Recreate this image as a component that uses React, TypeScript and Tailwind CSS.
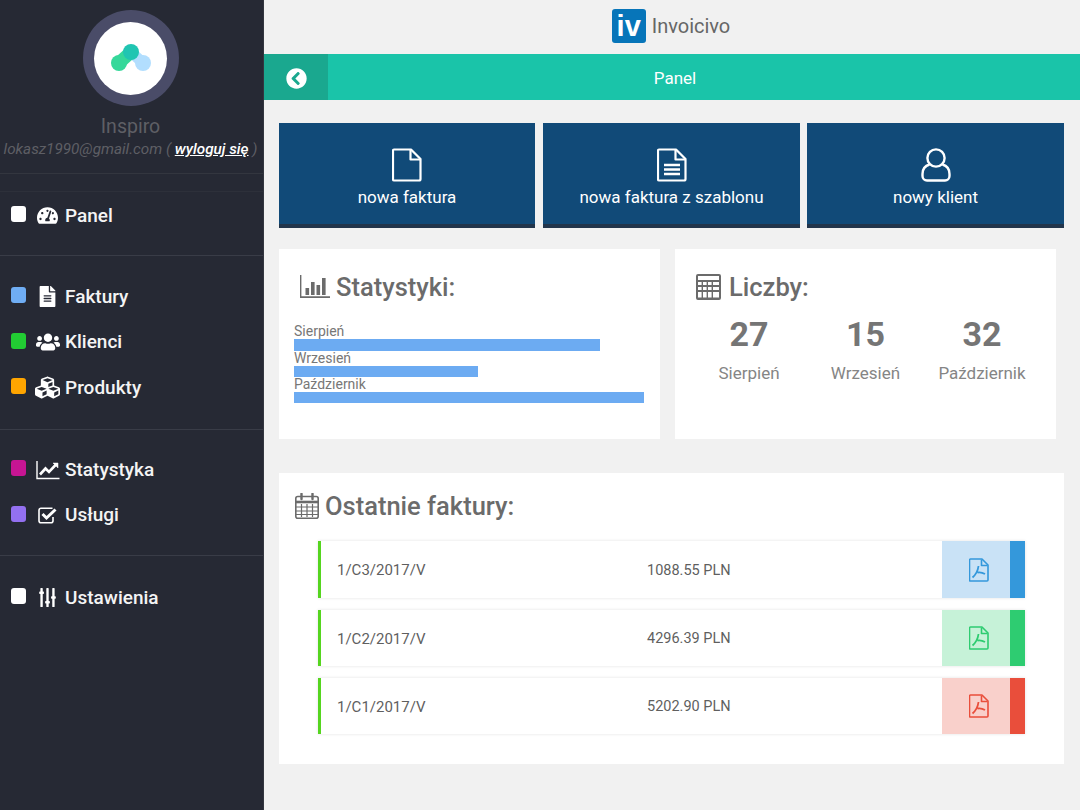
import React from 'react';
import { FaChevronCircleLeft, FaCubes, FaFileAlt, FaSlidersH, FaTachometerAlt, FaUsers } from 'react-icons/fa';

const FileOutline: React.FC<{ lines?: boolean }> = ({ lines }) => (
  <svg width="30" height="34" viewBox="0 0 30 34" fill="none" stroke="currentColor" strokeWidth="2.2" strokeLinejoin="round">
    <path d="M2 1.5 H19 L28.5 11 V31 a1.5 1.5 0 0 1 -1.5 1.5 H2 a1 1 0 0 1 -1 -1 V2.5 a1 1 0 0 1 1 -1 Z" />
    <path d="M18.5 2 V11.5 H28" />
    {lines && <path d="M7 17 H23 M7 21.5 H23 M7 26 H23" strokeWidth="2.4" />}
  </svg>
);

const UserOutline = () => (
  <svg width="30" height="34" viewBox="0 0 30 34" fill="none" stroke="currentColor" strokeWidth="2.4">
    <circle cx="15" cy="10" r="8.6" />
    <path d="M8.5 16.5 C5 17.5 1.5 20 1.5 26 V28 a4.5 4.5 0 0 0 4.5 4.5 H24 a4.5 4.5 0 0 0 4.5 -4.5 V26 C28.5 20 25 17.5 21.5 16.5" />
  </svg>
);

const PdfOutline = () => (
  <svg width="20" height="24" viewBox="0 0 20 24" fill="none" stroke="currentColor" strokeWidth="1.6" strokeLinejoin="round">
    <path d="M1.5 1 H13 L19 7 V22 a1 1 0 0 1 -1 1 H1.5 a1 1 0 0 1 -1 -1 V2 a1 1 0 0 1 1 -1 Z" />
    <path d="M12.5 1.5 V7.5 H18.5" />
    <path d="M9.5 8 C9 12 7.5 16 3.5 19.5 M8.5 14.5 C11 14 13.5 14.5 16 16" strokeWidth="1.8" />
  </svg>
);

const LineChartIcon = () => (
  <svg width="24" height="20" viewBox="0 0 24 20" fill="none" stroke="currentColor">
    <path d="M1 1 V18.5 H23.5" strokeWidth="1.4" />
    <path d="M4 14.5 L9.5 8.5 L13 12 L20.5 4" strokeWidth="2.6" />
    <path d="M17 3 H22 V8 Z" fill="currentColor" strokeWidth="0.5" />
  </svg>
);

const CheckSquareIcon = () => (
  <svg width="20" height="17" viewBox="0 0 20 17" fill="none" stroke="currentColor">
    <path d="M14.5 1.2 H3 a2 2 0 0 0 -2 2 V13.8 a2 2 0 0 0 2 2 H13 a2 2 0 0 0 2 -2 V10" strokeWidth="1.6" />
    <path d="M4.5 7 L8.5 11 L17.5 2.5" strokeWidth="3" />
  </svg>
);

const BarChartIcon = () => (
  <svg width="30" height="24" viewBox="0 0 30 24" fill="currentColor" className="mr-[6px]">
    <path d="M0 0 H1.4 V21.3 H30 V23 H0 Z" />
    <rect x="5.5" y="13" width="3.6" height="7" />
    <rect x="11" y="7" width="3.6" height="13" />
    <rect x="16.5" y="10" width="3.6" height="10" />
    <rect x="22" y="3" width="3.6" height="17" />
  </svg>
);

const CalculatorIcon = () => (
  <svg width="25" height="26" viewBox="0 0 25 26" className="mr-[8px]" fill="currentColor">
    <path d="M2 0 H23 a2 2 0 0 1 2 2 V24 a2 2 0 0 1 -2 2 H2 a2 2 0 0 1 -2 -2 V2 a2 2 0 0 1 2 -2 Z M2 2 V6 H23 V2 Z" fillRule="evenodd" />
    <g fill="#fff">
      <rect x="2" y="8" width="3.6" height="3" />
      <rect x="7" y="8" width="3.6" height="3" />
      <rect x="12" y="8" width="3.6" height="3" />
      <rect x="17" y="8" width="6" height="3" />
      <rect x="2" y="13" width="3.6" height="3" />
      <rect x="7" y="13" width="3.6" height="3" />
      <rect x="12" y="13" width="3.6" height="3" />
      <rect x="17" y="13" width="6" height="3" />
      <rect x="2" y="18" width="3.6" height="5.5" />
      <rect x="7" y="18" width="3.6" height="5.5" />
      <rect x="12" y="18" width="3.6" height="5.5" />
      <rect x="17" y="18" width="6" height="5.5" />
    </g>
  </svg>
);

const CalendarIcon = () => (
  <svg width="24" height="26" viewBox="0 0 24 26" className="mr-[6px]" fill="none" stroke="currentColor">
    <rect x="0.8" y="3.5" width="22.4" height="21.7" rx="2" strokeWidth="1.6" />
    <path d="M1 9 H23" strokeWidth="2.6" />
    <path d="M6.5 11 V24 M12 11 V24 M17.5 11 V24 M1 14 H23 M1 18 H23 M1 21.5 H23" strokeWidth="1.2" />
    <path d="M6.5 0.8 V6 M17.5 0.8 V6" strokeWidth="2.4" strokeLinecap="round" />
  </svg>
);

const MenuItem: React.FC<{ dot: string; icon: React.ReactNode; label: string }> = ({ dot, icon, label }) => (
  <div className="flex items-center h-[45.5px] pl-[11px]">
    <span className={`w-[15px] h-[16px] rounded-[3px] -mt-[3px] ${dot}`} />
    <span className="w-[39px] flex justify-center text-white text-[21px] pl-[4px]">{icon}</span>
    <span className="text-[19px] font-medium text-[#f4f4f4]">{label}</span>
  </div>
);

const BigButton: React.FC<{ icon: React.ReactNode; label: string; className: string }> = ({ icon, label, className }) => (
  <div
    className={`h-[105px] bg-[#114a78] border-b-[4px] border-[#22354b] flex flex-col items-center pt-[25px] text-white ${className}`}
  >
    <span className="h-[34px]">{icon}</span>
    <span className="text-[17px] mt-[3px] leading-[24px]">{label}</span>
  </div>
);

const InvoiceRow: React.FC<{ no: string; amount: string; light: string; strong: string; text: string; className: string }> = ({
  no,
  amount,
  light,
  strong,
  text,
  className,
}) => (
  <div className={`flex items-stretch w-[707px] border-l-[3px] border-[#55d51f] shadow-[0_0_3px_rgba(0,0,0,0.12)] bg-white text-[#5f5f5f] ${className}`}>
    <div className="w-[325px] pl-[16px] pt-[2px] flex items-center text-[15px]">{no}</div>
    <div className="w-[296px] pl-[1px] pt-[2px] flex items-center text-[14.5px]">{amount}</div>
    <div className={`w-[68px] pl-[5px] flex items-center justify-center ${light} ${text}`}>
      <PdfOutline />
    </div>
    <div className={`w-[15px] ${strong}`} />
  </div>
);

const Count: React.FC<{ value: string; label: string; className: string }> = ({ value, label, className }) => (
  <div className={className}>
    <div className="text-[34px] font-bold text-[#757575] leading-[40px]">{value}</div>
    <div className="text-[17px] text-[#858585] mt-[7px]">{label}</div>
  </div>
);

export default function App() {
  return (
    <div className="flex w-[1080px] h-[810px] overflow-hidden bg-[#f1f1f1] font-['Roboto',sans-serif]">
      <aside className="w-[264px] shrink-0 bg-[#262934] border-r border-[#33363f]">
        <div className="flex flex-col items-center pt-[10px] pr-[2px] h-[174px] border-b border-[#33363f]">
          <div className="w-[96px] h-[96px] rounded-full bg-[#4a4c68] flex items-center justify-center">
            <div className="w-[73px] h-[73px] rounded-full bg-white flex items-center justify-center">
              <svg width="44" height="32" viewBox="0 0 44 32" strokeLinecap="round">
                <path d="M34 21 L22 10" stroke="#b2defe" strokeWidth="11" />
                <path d="M10 21 L22 10" stroke="#35d89a" strokeWidth="13" />
                <circle cx="34" cy="21" r="8" fill="#b2defe" />
                <circle cx="10" cy="21" r="8" fill="#35d89a" />
                <circle cx="22" cy="10" r="8" fill="#20c5b2" />
              </svg>
            </div>
          </div>
          <div className="text-[19.5px] text-[#5e5f65] mt-[9px] leading-[24px]">Inspiro</div>
          <div className="text-[15.25px] text-[#5e5f65] italic leading-[20px] whitespace-nowrap">
            lokasz1990@gmail.com ( <span className="text-white font-medium underline">wyloguj się</span> )
          </div>
        </div>
        <div className="mt-[17px] border-t border-[#2d303a] h-[64px] pt-[1px]">
          <MenuItem dot="bg-white" icon={<FaTachometerAlt />} label="Panel" />
        </div>
        <div className="border-t border-[#393c47] h-[174px] pt-[18px]">
          <MenuItem dot="bg-[#6fadf4]" icon={<FaFileAlt />} label="Faktury" />
          <MenuItem dot="bg-[#22cc33]" icon={<FaUsers className="text-[24px]" />} label="Klienci" />
          <MenuItem dot="bg-[#ffa500]" icon={<FaCubes className="text-[25px]" />} label="Produkty" />
        </div>
        <div className="border-t border-[#393c47] h-[126px] pt-[17px]">
          <MenuItem dot="bg-[#c71593]" icon={<LineChartIcon />} label="Statystyka" />
          <MenuItem dot="bg-[#9370f0]" icon={<CheckSquareIcon />} label="Usługi" />
        </div>
        <div className="border-t border-[#393c47] pt-[19px]">
          <MenuItem dot="bg-white" icon={<FaSlidersH className="rotate-90 text-[19px]" />} label="Ustawienia" />
        </div>
      </aside>

      <main className="flex-1 min-w-0">
        <div className="h-[54px] flex items-center justify-center gap-[6px] pr-[2px] pb-[2px]">
          <div className="w-[34px] h-[34px] rounded-[3px] bg-[#0775b9] text-white flex items-center justify-center text-[29px] font-bold font-['Liberation_Sans',sans-serif] leading-none">
            iv
          </div>
          <span className="text-[20px] text-[#666]">Invoicivo</span>
        </div>
        <div className="h-[46px] bg-[#1ac4a9] flex items-center">
          <div className="w-[64px] h-full pt-[2px] bg-[#1aa88f] flex items-center justify-center text-white text-[21px] shrink-0">
            <FaChevronCircleLeft />
          </div>
          <div className="flex-1 text-center text-white text-[17px] pr-[58px] pt-[3px]">Panel</div>
        </div>

        <div className="flex mt-[23px] ml-[15px]">
          <BigButton icon={<FileOutline />} label="nowa faktura" className="w-[256px]" />
          <BigButton icon={<FileOutline lines />} label="nowa faktura z szablonu" className="w-[257px] ml-[8px]" />
          <BigButton icon={<UserOutline />} label="nowy klient" className="w-[257px] ml-[7px]" />
        </div>

        <div className="flex gap-[15px] mt-[21px] ml-[15px]">
          <section className="w-[381px] h-[190px] bg-white px-[15px] pt-[20px]">
            <h2 className="flex items-center text-[25.5px] font-medium leading-[36px] pl-[6px] text-[#6b6b6b]">
              <BarChartIcon />
              Statystyki:
            </h2>
            <div className="mt-[19px] text-[14px] leading-[15px] text-[#777]">
              <div>Sierpień</div>
              <div className="h-[12px] w-[306px] bg-[#6cabf2]" />
              <div>Wrzesień</div>
              <div className="h-[11px] w-[184px] bg-[#6cabf2]" />
              <div>Październik</div>
              <div className="h-[11px] w-[350px] bg-[#6cabf2]" />
            </div>
          </section>
          <section className="w-[381px] h-[190px] bg-white pl-[21px] pt-[20px] text-[#6b6b6b]">
            <h2 className="flex items-center text-[25.5px] font-medium leading-[36px]">
              <CalculatorIcon />
              Liczby:
            </h2>
            <div className="flex text-center mt-[9px]">
              <Count value="27" label="Sierpień" className="w-[106px]" />
              <Count value="15" label="Wrzesień" className="w-[127px]" />
              <Count value="32" label="Październik" className="w-[106px]" />
            </div>
          </section>
        </div>

        <section className="w-[785px] h-[291px] bg-white ml-[15px] mt-[34px] pt-[15px] pl-[39px]">
          <h2 className="flex items-center text-[25.5px] font-medium leading-[36px] text-[#6b6b6b] -ml-[23px]">
            <CalendarIcon />
            Ostatnie faktury:
          </h2>
          <div className="mt-[17px]">
            <InvoiceRow no="1/C3/2017/V" amount="1088.55 PLN" light="bg-[#c9e2f6]" strong="bg-[#3498db]" text="text-[#3498db]" className="h-[57px]" />
            <InvoiceRow no="1/C2/2017/V" amount="4296.39 PLN" light="bg-[#c6f2d8]" strong="bg-[#2ecc71]" text="text-[#2ecc71]" className="h-[56px] mt-[12px]" />
            <InvoiceRow no="1/C1/2017/V" amount="5202.90 PLN" light="bg-[#f9d0cb]" strong="bg-[#e94e3b]" text="text-[#e94e3b]" className="h-[56px] mt-[12px]" />
          </div>
        </section>
      </main>
    </div>
  );
}
